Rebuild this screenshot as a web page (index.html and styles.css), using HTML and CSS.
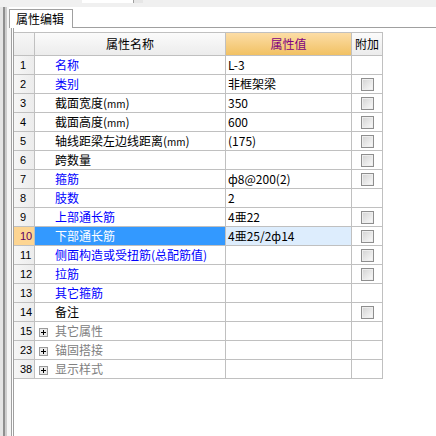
FILE: index.html
```html
<!DOCTYPE html>
<html lang="zh-CN">
<head>
<meta charset="utf-8">
<title>属性编辑</title>
<link rel="stylesheet" href="styles.css">
</head>
<body>
<div class="app">
  <div class="topbar"><div class="combo"><div class="combo-btn"></div></div></div>
  <div class="main">
    <div class="gutter"></div>
    <div class="pane">
      <div class="tabs"><div class="tab">属性编辑</div></div>
      <div class="body">
        <div class="strip"></div>
        <div class="frame">
          <div class="grid">
            <table class="props">
              <colgroup>
                <col class="c-num"><col class="c-name"><col class="c-val"><col class="c-ext">
              </colgroup>
              <thead>
                <tr>
                  <th class="num"></th>
                  <th class="h-name">属性名称</th>
                  <th class="h-val">属性值</th>
                  <th class="h-ext">附加</th>
                </tr>
              </thead>
              <tbody>
                <tr><td class="num">1</td><td class="name blue">名称</td><td class="val">L-3</td><td class="ext"></td></tr>
                <tr><td class="num">2</td><td class="name blue">类别</td><td class="val">非框架梁</td><td class="ext"><span class="cb"></span></td></tr>
                <tr><td class="num">3</td><td class="name">截面宽度(<span class="unit">mm</span>)</td><td class="val">350</td><td class="ext"><span class="cb"></span></td></tr>
                <tr><td class="num">4</td><td class="name">截面高度(<span class="unit">mm</span>)</td><td class="val">600</td><td class="ext"><span class="cb"></span></td></tr>
                <tr><td class="num">5</td><td class="name">轴线距梁左边线距离(<span class="unit">mm</span>)</td><td class="val">(175)</td><td class="ext"><span class="cb"></span></td></tr>
                <tr><td class="num">6</td><td class="name">跨数量</td><td class="val"></td><td class="ext"><span class="cb"></span></td></tr>
                <tr><td class="num">7</td><td class="name blue">箍筋</td><td class="val">ф8@200(2)</td><td class="ext"><span class="cb"></span></td></tr>
                <tr><td class="num">8</td><td class="name blue">肢数</td><td class="val">2</td><td class="ext"></td></tr>
                <tr><td class="num">9</td><td class="name blue">上部通长筋</td><td class="val">4亜22</td><td class="ext"><span class="cb"></span></td></tr>
                <tr class="sel"><td class="num">10</td><td class="name">下部通长筋</td><td class="val">4亜25/2ф14</td><td class="ext"><span class="cb"></span></td></tr>
                <tr><td class="num">11</td><td class="name blue">侧面构造或受扭筋(总配筋值)</td><td class="val"></td><td class="ext"><span class="cb"></span></td></tr>
                <tr><td class="num">12</td><td class="name blue">拉筋</td><td class="val"></td><td class="ext"><span class="cb"></span></td></tr>
                <tr><td class="num">13</td><td class="name blue">其它箍筋</td><td class="val"></td><td class="ext"></td></tr>
                <tr><td class="num">14</td><td class="name">备注</td><td class="val"></td><td class="ext"><span class="cb"></span></td></tr>
                <tr><td class="num">15</td><td class="name group"><svg class="exp" width="9" height="9" viewBox="0 0 9 9"><rect x="0.5" y="0.5" width="8" height="8" fill="#ebebeb" stroke="#9a9a9a"/><path d="M2 4.5H7M4.5 2V7" stroke="#000" stroke-width="1"/></svg>其它属性</td><td class="val"></td><td class="ext"></td></tr>
                <tr><td class="num">23</td><td class="name group"><svg class="exp" width="9" height="9" viewBox="0 0 9 9"><rect x="0.5" y="0.5" width="8" height="8" fill="#ebebeb" stroke="#9a9a9a"/><path d="M2 4.5H7M4.5 2V7" stroke="#000" stroke-width="1"/></svg>锚固搭接</td><td class="val"></td><td class="ext"></td></tr>
                <tr><td class="num">38</td><td class="name group"><svg class="exp" width="9" height="9" viewBox="0 0 9 9"><rect x="0.5" y="0.5" width="8" height="8" fill="#ebebeb" stroke="#9a9a9a"/><path d="M2 4.5H7M4.5 2V7" stroke="#000" stroke-width="1"/></svg>显示样式</td><td class="val"></td><td class="ext"></td></tr>
              </tbody>
            </table>
          </div>
        </div>
      </div>
    </div>
  </div>
</div>
</body>
</html>
```

FILE: styles.css
```css
html, body {
  margin: 0;
  padding: 0;
  background: #ffffff;
}

body {
  width: 436px;
  height: 436px;
  overflow: hidden;
  font-family: "Noto Sans CJK SC", sans-serif;
  font-size: 12px;
  color: #000000;
}

.app {
  display: flex;
  flex-direction: column;
  height: 436px;
}

.topbar {
  height: 7px;
  background: #f0f0f0;
  display: flex;
}

.combo {
  margin-left: 82px;
  width: 61px;
  height: 3px;
  background: #ffffff;
  display: flex;
  justify-content: flex-end;
}

.combo-btn {
  width: 9px;
  border-left: 1px solid #a0a0a0;
  background: #e6e6e6;
}

.main {
  flex: 1;
  display: flex;
}

.gutter {
  width: 9px;
  background: linear-gradient(to right, #e4e4e4 0 3px, #8f8f8f 3px 5px, #cdcdcd 5px 7px, #f4f4f4 7px 9px);
}

.pane {
  flex: 1;
  display: flex;
  flex-direction: column;
  background: #ffffff;
}

.tabs {
  height: 21px;
  box-sizing: border-box;
  padding-top: 2px;
  border-bottom: 1px solid #a0a0a0;
  display: flex;
}

.tab {
  width: 64px;
  height: 19px;
  box-sizing: border-box;
  border: 1px solid #a0a0a0;
  border-bottom: none;
  background: #ffffff;
  padding-left: 6px;
  line-height: 17px;
  margin-bottom: -1px;
}

.body {
  flex: 1;
  display: flex;
}

.strip {
  width: 2px;
  background: #f4f4f4;
}

.frame {
  flex: 1;
  display: flex;
  border-left: 1px solid #a0a0a0;
  padding-left: 1px;
}

.grid {
  flex: 1;
  border-left: 1px solid #a0a0a0;
  padding-top: 4px;
}

.props {
  border-collapse: separate;
  border-spacing: 0;
  table-layout: fixed;
  width: 369px;
  border-top: 1px solid #c0c0c0;
}

.c-num { width: 21px; }
.c-name { width: 191px; }
.c-val { width: 126px; }
.c-ext { width: 31px; }

.props th,
.props td {
  padding: 0;
  border-right: 1px solid #c0c0c0;
  border-bottom: 1px solid #c0c0c0;
  white-space: nowrap;
  overflow: hidden;
  font-size: 12px;
}

.props th {
  height: 22px;
  line-height: 22px;
  font-weight: normal;
  text-align: center;
  background: linear-gradient(to bottom, #fbfbfb, #ececec);
}

.props th.h-val {
  background: linear-gradient(to bottom, #fcdda6, #f1c163);
  color: #800080;
}

.props td {
  height: 18px;
  line-height: 18px;
  vertical-align: middle;
}

.props td.num {
  padding-left: 6px;
  background: linear-gradient(to right, #f6f6f6, #ececec);
  font-family: "Liberation Sans", sans-serif;
  font-size: 11px;
}

.props th.num {
  background: linear-gradient(to bottom, #f6f6f6, #ebebeb);
}

.props td.name {
  padding-left: 20px;
}

.props td.name.group {
  padding-left: 4px;
  color: #808080;
}

.exp {
  display: inline-block;
  vertical-align: -1px;
  margin-right: 7px;
}

.blue {
  color: #0000ff;
}

.unit {
  font-size: 10px;
  line-height: 1;
}

.props td.val {
  padding-left: 2px;
}

.props td.ext {
  text-align: center;
}

.cb {
  display: block;
  width: 11px;
  height: 11px;
  margin: 0 auto;
  border: 1px solid #8e8e8e;
  background: linear-gradient(135deg, #d2d2d2, #fbfbfb);
  box-shadow: inset 0 0 0 1px #eeeeee;
}

.sel td.num {
  background: #fdd592;
  color: #600060;
}

.sel td.name {
  background: #3399ff;
  color: #ffffff;
}

.sel td.val {
  background: #ddedfd;
}
```
